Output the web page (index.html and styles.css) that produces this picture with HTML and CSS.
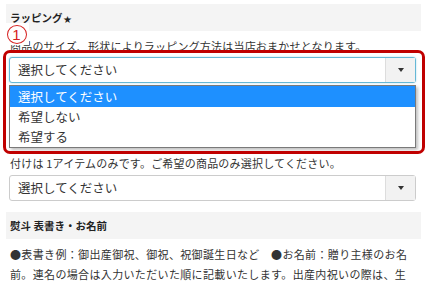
FILE: index.html
```html
<!DOCTYPE html>
<html lang="ja">
<head>
<meta charset="utf-8">
<link rel="stylesheet" href="styles.css">
</head>
<body>
<div class="page">
  <div class="sec-head">ラッピング<span class="star">★</span></div>
  <p class="note note-first">商品のサイズ、形状によりラッピング方法は当店おまかせとなります。</p>
  <div class="field">
    <div class="select focused">
      <span class="select-text">選択してください</span>
      <span class="select-btn"><span class="caret"></span></span>
    </div>
    <ul class="options">
      <li class="opt active">選択してください</li>
      <li class="opt">希望しない</li>
      <li class="opt">希望する</li>
    </ul>
  </div>
  <div class="covered-area"></div>
  <p class="note note-tail">付けは 1アイテムのみです。ご希望の商品のみ選択してください。</p>
  <div class="select">
    <span class="select-text">選択してください</span>
    <span class="select-btn"><span class="caret"></span></span>
  </div>
  <div class="sec-head sec-head2">熨斗 表書き・お名前</div>
  <p class="body-text">●表書き例：御出産御祝、御祝、祝御誕生日など　●お名前：贈り主様のお名前。連名の場合は入力いただいた順に記載いたします。出産内祝いの際は、生</p>

  <div class="annot-box"></div>
  <div class="annot-num"><span class="annot-circle">1</span></div>
</div>
</body>
</html>
```

FILE: styles.css
```css
* { box-sizing: border-box; }
html, body { margin: 0; padding: 0; background: #fff; }
body {
  font-family: "Noto Sans CJK JP", "Noto Sans", sans-serif;
  color: #333;
  width: 433px;
  height: 285px;
  overflow: hidden;
}
.page {
  position: relative;
  padding: 4px 12px 0 6px;
}
.sec-head {
  background: #f4f4f4;
  height: 27px;
  line-height: 27px;
  padding-left: 4px;
  font-size: 10.5px;
  font-weight: bold;
  color: #222;
}
.star { font-size: 8px; margin-left: 1px; }
.note {
  margin: 0;
  padding-left: 4px;
  font-size: 11px;
  letter-spacing: 0.2px;
  line-height: 18px;
}
.note-first { margin-top: 6px; }
.field { position: relative; margin-top: 2px; }
.select {
  margin-left: 3px;
  width: 407px;
  height: 26px;
  border: 1px solid #ccc;
  border-radius: 3px;
  display: flex;
  align-items: stretch;
  background: #fff;
}
.select.focused { border-color: #66b8d6; box-shadow: 0 0 2px rgba(102,184,214,0.6); }
.select-text {
  flex: 1;
  padding-left: 8px;
  font-size: 12.5px;
  line-height: 24px;
  color: #333;
}
.select-btn {
  width: 30px;
  border-left: 1px solid #ddd;
  background: #f2f2f2;
  display: flex;
  align-items: center;
  justify-content: center;
}
.caret {
  width: 0; height: 0;
  border-left: 3px solid transparent;
  border-right: 3px solid transparent;
  border-top: 4px solid #333;
}
.options {
  position: absolute;
  left: 3px;
  top: 28px;
  width: 407px;
  margin: 0;
  padding: 0;
  list-style: none;
  background: #fff;
  border: 1px solid #7a7a7a;
  box-shadow: 2px 2px 3px rgba(0,0,0,0.25);
  z-index: 2;
}
.opt {
  height: 20px;
  line-height: 20px;
  padding-left: 8px;
  font-size: 12.5px;
  color: #333;
}
.opt.active { background: #1e90ff; color: #fff; height: 21px; line-height: 21px; }
.covered-area { height: 70px; }
.note-tail { margin-top: 1px; margin-bottom: 3px; }
.sec-head2 { margin-top: 11px; }
.body-text {
  margin: 5px 0 0;
  padding: 0 10px 0 4px;
  font-size: 11px;
  letter-spacing: 0.35px;
  line-height: 20px;
}
.annot-box {
  position: absolute;
  left: 3px;
  top: 50px;
  width: 422px;
  height: 104px;
  border: 3px solid #c00000;
  border-radius: 7px;
  z-index: 3;
  pointer-events: none;
}
.annot-num {
  position: absolute;
  left: 4px;
  top: 23px;
  width: 25px;
  height: 22px;
  background: #fff;
  display: flex;
  align-items: flex-start;
  justify-content: center;
  padding-top: 2px;
  z-index: 4;
}
.annot-circle {
  width: 20px;
  height: 19px;
  border: 1.3px solid #d62020;
  border-radius: 50%;
  color: #d62020;
  font-family: "Liberation Sans", sans-serif;
  font-size: 15px;
  line-height: 17px;
  text-align: center;
}
```
